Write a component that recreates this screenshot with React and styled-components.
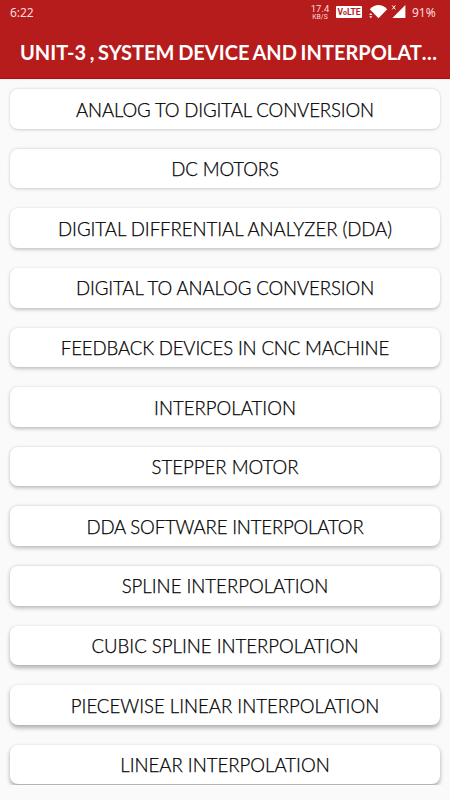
import React from 'react';
import styled, { createGlobalStyle } from 'styled-components';

const GlobalStyle = createGlobalStyle`
  * {
    box-sizing: border-box;
  }
  body {
    margin: 0;
    background: #fafafa;
    font-family: Lato, 'Open Sans', sans-serif;
  }
`;

const Screen = styled.div`
  display: flex;
  flex-direction: column;
  width: 450px;
  height: 800px;
  overflow: hidden;
  background: #fafafa;
`;

const Header = styled.header`
  flex: none;
  height: 79px;
  background: #b71c1c;
  border-bottom: 1px solid #a80f10;
  box-shadow: 0 1px 0 #ffeceb;
  color: #fff;
`;

const StatusBar = styled.div`
  display: flex;
  align-items: center;
  height: 24px;
  padding: 0 14px 0 10px;
  color: #fbdcdc;
  font-family: 'Noto Sans', sans-serif;
  font-size: 12px;
`;

const Clock = styled.span`
  flex: 1;
  letter-spacing: -0.1px;
`;

const Speed = styled.div`
  display: flex;
  flex-direction: column;
  align-items: center;
  width: 20px;
  margin-right: 6px;
  padding-bottom: 1px;
  font-family: Roboto, sans-serif;
  font-size: 9.5px;
  line-height: 10px;
`;

const SpeedUnit = styled.span`
  font-size: 6.8px;
  line-height: 6px;
`;

const Volte = styled.span`
  width: 26px;
  height: 12px;
  border-radius: 1px;
  background: #fff;
  color: #b71c1c;
  font-family: Roboto, sans-serif;
  font-size: 8.5px;
  font-weight: 700;
  line-height: 12.5px;
  text-align: center;
`;

const SmallO = styled.span`
  font-size: 7px;
`;

const SignalIcons = styled.svg`
  width: 38px;
  height: 16px;
  margin: 0 6px 0 6px;
`;

const Battery = styled.span`
  width: 24px;
  white-space: nowrap;
`;

const Title = styled.h1`
  height: 54px;
  margin: 0;
  padding-left: 20px;
  font-size: 20px;
  font-weight: 700;
  line-height: 56px;
  word-spacing: -1.2px;
  white-space: nowrap;
`;

const Dots = styled.span`
  letter-spacing: 0.6px;
`;

const List = styled.main`
  display: flex;
  flex-direction: column;
  gap: 20px;
  height: 706px;
  padding: 10.3px 10px 0;
  overflow: hidden;
`;

const Card = styled.button`
  flex: none;
  display: flex;
  justify-content: center;
  align-items: center;
  height: 39.6px;
  padding: 1.2px 0 0;
  border: 0;
  border-radius: 8px;
  background: #fff;
  color: #000;
  font-family: inherit;
  font-size: 18.6px;
  font-weight: 300;
  letter-spacing: ${props => props.$spacing}px;
  -webkit-text-stroke: 0.25px #000;
  white-space: nowrap;
  box-shadow: 0 ${props => 0.7 + props.$depth * 0.16}px
      ${props => 3 + props.$depth * 0.15}px
      rgba(0, 0, 0, ${props => 0.17 + props.$depth * 0.013}),
    0 0 2px rgba(0, 0, 0, 0.04);
`;

const topics = [
  { name: 'ANALOG TO DIGITAL CONVERSION', spacing: -0.13 },
  { name: 'DC MOTORS', spacing: -0.1 },
  { name: 'DIGITAL DIFFRENTIAL ANALYZER (DDA)', spacing: -0.04 },
  { name: 'DIGITAL TO ANALOG CONVERSION', spacing: -0.1 },
  { name: 'FEEDBACK DEVICES IN CNC MACHINE', spacing: -0.14 },
  { name: 'INTERPOLATION', spacing: 0 },
  { name: 'STEPPER MOTOR', spacing: 0 },
  { name: 'DDA SOFTWARE INTERPOLATOR', spacing: -0.18 },
  { name: 'SPLINE INTERPOLATION', spacing: 0 },
  { name: 'CUBIC SPLINE INTERPOLATION', spacing: 0 },
  { name: 'PIECEWISE LINEAR INTERPOLATION', spacing: 0 },
  { name: 'LINEAR INTERPOLATION', spacing: 0 },
];

const App = () => (
  <Screen>
    <GlobalStyle />
    <Header>
      <StatusBar>
        <Clock>6:22</Clock>
        <Speed>
          17.4
          <SpeedUnit>KB/S</SpeedUnit>
        </Speed>
        <Volte>
          V<SmallO>o</SmallO>LTE
        </Volte>
        <SignalIcons viewBox="0 0 38 16">
          <path d="M1.8 5.2Q10.5-3 19.2 5.2L10.5 14.2Z" fill="#fff" />
          <path d="M0 8.4h4.3l1 1.2v5H0z" fill="#b71c1c" />
          <path d="M1.2 11L2.8 9l1.6 2zM1.2 12.2l1.6 2 1.6-2z" fill="#fff" />
          <path d="M24.2 1.4l3.2 4M27.4 1.4l-3.2 4" stroke="#fff" strokeWidth="1" />
          <path d="M37.4 1v13H24.4z" fill="#fff" />
        </SignalIcons>
        <Battery>91%</Battery>
      </StatusBar>
      <Title>
        UNIT-3 , SYSTEM DEVICE AND INTERPOLAT<Dots>...</Dots>
      </Title>
    </Header>
    <List>
      {topics.map((topic, index) => (
        <Card key={topic.name} $depth={index} $spacing={topic.spacing}>
          {topic.name}
        </Card>
      ))}
    </List>
  </Screen>
);

export default App;
